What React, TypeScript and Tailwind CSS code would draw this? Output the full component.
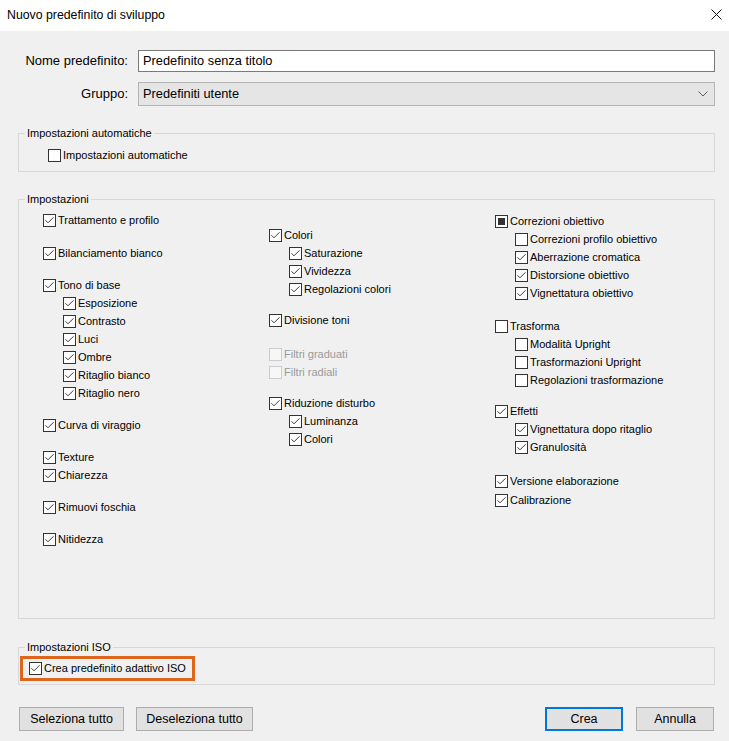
import React from "react";

type S = "on" | "off" | "mixed" | "dis";

function Box({ s }: { s: S }) {
  if (s === "dis") {
    return <span className="flex h-[13px] w-[13px] shrink-0 border border-[#cccccc] bg-[#f7f7f7]" />;
  }
  return (
    <span className="flex h-[13px] w-[13px] shrink-0 items-center justify-center border border-[#333333] bg-white">
      {s === "on" && (
        <svg width="11" height="11" viewBox="0 0 11 11">
          <polyline points="1.5,5.3 4,7.8 9.5,2.3" fill="none" stroke="#3a3a3a" strokeWidth="1" />
        </svg>
      )}
      {s === "mixed" && <span className="h-[7px] w-[7px] bg-[#333333]" />}
    </span>
  );
}

type It = { l: string; s?: S; sub?: boolean; mt?: string };

function Item({ it }: { it: It }) {
  const s = it.s ?? "on";
  return (
    <div className={`flex h-[18px] items-center ${it.sub ? "pl-[20px]" : ""} ${it.mt ?? ""}`}>
      <Box s={s} />
      <span className={`ml-[2px] whitespace-nowrap ${s === "dis" ? "text-[#9a9a9a]" : "text-black"}`}>{it.l}</span>
    </div>
  );
}

const left: It[] = [
  { l: "Trattamento e profilo" },
  { l: "Bilanciamento bianco", mt: "mt-[15px]" },
  { l: "Tono di base", mt: "mt-[14px]" },
  { l: "Esposizione", sub: true },
  { l: "Contrasto", sub: true },
  { l: "Luci", sub: true },
  { l: "Ombre", sub: true },
  { l: "Ritaglio bianco", sub: true },
  { l: "Ritaglio nero", sub: true },
  { l: "Curva di viraggio", mt: "mt-[14px]" },
  { l: "Texture", mt: "mt-[14px]" },
  { l: "Chiarezza" },
  { l: "Rimuovi foschia", mt: "mt-[14px]" },
  { l: "Nitidezza", mt: "mt-[14px]" },
];

const middle: It[] = [
  { l: "Colori" },
  { l: "Saturazione", sub: true },
  { l: "Vividezza", sub: true },
  { l: "Regolazioni colori", sub: true },
  { l: "Divisione toni", mt: "mt-[13px]" },
  { l: "Filtri graduati", s: "dis", mt: "mt-[16px]" },
  { l: "Filtri radiali", s: "dis" },
  { l: "Riduzione disturbo", mt: "mt-[13px]" },
  { l: "Luminanza", sub: true },
  { l: "Colori", sub: true },
];

const right: It[] = [
  { l: "Correzioni obiettivo", s: "mixed" },
  { l: "Correzioni profilo obiettivo", s: "off", sub: true },
  { l: "Aberrazione cromatica", sub: true },
  { l: "Distorsione obiettivo", sub: true },
  { l: "Vignettatura obiettivo", sub: true },
  { l: "Trasforma", s: "off", mt: "mt-[15px]" },
  { l: "Modalità Upright", s: "off", sub: true },
  { l: "Trasformazioni Upright", s: "off", sub: true },
  { l: "Regolazioni trasformazione", s: "off", sub: true },
  { l: "Effetti", mt: "mt-[13px]" },
  { l: "Vignettatura dopo ritaglio", sub: true },
  { l: "Granulosità", sub: true },
  { l: "Versione elaborazione", mt: "mt-[16px]" },
  { l: "Calibrazione", mt: "mt-[1px]" },
];

function Legend({ children }: { children: React.ReactNode }) {
  return <legend className="ml-[6px] px-[2px] text-[11px] leading-[14px] text-black">{children}</legend>;
}

function Btn({ children, w, primary }: { children: React.ReactNode; w: string; primary?: boolean }) {
  return (
    <div
      className={`flex h-[24px] ${w} items-center justify-center bg-[#e1e1e1] text-[12.5px] text-black ${
        primary ? "border-2 border-[#0078d7]" : "border border-[#adadad]"
      }`}
    >
      {children}
    </div>
  );
}

export default function App() {
  return (
    <div className="flex h-[741px] w-[729px] flex-col overflow-hidden bg-[#f0f0f0] font-['Liberation_Sans',Arial,sans-serif] text-[11px] text-black">
      {/* title bar */}
      <div className="flex h-[31px] shrink-0 items-center justify-between bg-white pl-[7px] pr-[7px]">
        <span className="text-[12.3px] text-black">Nuovo predefinito di sviluppo</span>
        <svg width="11" height="11" viewBox="0 0 11 11" className="mb-[2px]">
          <line x1="0.5" y1="0.5" x2="10.5" y2="10.5" stroke="#111" strokeWidth="1" />
          <line x1="10.5" y1="0.5" x2="0.5" y2="10.5" stroke="#111" strokeWidth="1" />
        </svg>
      </div>

      <div className="flex flex-col pl-[18px] pr-[14px] pt-[19px]">
        {/* name row */}
        <div className="flex h-[22px] items-center">
          <span className="w-[110px] whitespace-nowrap text-right text-[13px]">Nome predefinito:</span>
          <div className="ml-[10px] flex h-[22px] flex-1 items-center border border-[#7a7a7a] bg-white pl-[4px] text-[12.8px]">
            Predefinito senza titolo
          </div>
        </div>
        {/* group row */}
        <div className="mt-[10px] flex h-[24px] items-center">
          <span className="w-[110px] whitespace-nowrap text-right text-[13px]">Gruppo:</span>
          <div className="ml-[10px] flex h-[24px] flex-1 items-center justify-between border border-[#b4b4b4] bg-[#e5e5e5] pl-[4px] pr-[6px] text-[12.8px]">
            <span>Predefiniti utente</span>
            <svg width="10" height="6" viewBox="0 0 10 6">
              <polyline points="0.5,0.5 5,5 9.5,0.5" fill="none" stroke="#606060" strokeWidth="1" />
            </svg>
          </div>
        </div>

        {/* auto settings */}
        <fieldset className="mt-[20px] border border-[#d8d8d8]">
          <Legend>Impostazioni automatiche</Legend>
          <div className="pb-[7px] pl-[29px] pt-[6px]">
            <Item it={{ l: "Impostazioni automatiche", s: "off" }} />
          </div>
        </fieldset>

        {/* settings */}
        <fieldset className="mt-[20px] border border-[#d8d8d8]">
          <Legend>Impostazioni</Legend>
          <div className="grid h-[412px] grid-cols-[226px_226px_1fr] content-start pl-[24px] pt-[5px]">
            <div className="flex flex-col">
              {left.map((it, i) => (
                <Item key={i} it={it} />
              ))}
            </div>
            <div className="flex flex-col pt-[15px]">
              {middle.map((it, i) => (
                <Item key={i} it={it} />
              ))}
            </div>
            <div className="flex flex-col pt-[1px]">
              {right.map((it, i) => (
                <Item key={i} it={it} />
              ))}
            </div>
          </div>
        </fieldset>

        {/* ISO */}
        <fieldset className="mt-[21px] border border-[#d8d8d8]">
          <Legend>Impostazioni ISO</Legend>
          <div className="pb-[3px] pl-[1px] pt-[2px]">
            <div className="flex h-[25px] w-fit items-center border-[3px] border-[#dd661c] pl-[6px] pr-[6px]">
              <Box s="on" />
              <span className="ml-[2px] whitespace-nowrap">Crea predefinito adattivo ISO</span>
            </div>
          </div>
        </fieldset>

        {/* buttons */}
        <div className="mt-[22px] flex items-center pl-[1px] pr-[1px]">
          <Btn w="w-[105px]">Seleziona tutto</Btn>
          <div className="ml-[12px]">
            <Btn w="w-[117px]">Deseleziona tutto</Btn>
          </div>
          <div className="flex-1" />
          <Btn w="w-[78px]" primary>
            Crea
          </Btn>
          <div className="ml-[13px]">
            <Btn w="w-[78px]">Annulla</Btn>
          </div>
        </div>
      </div>
    </div>
  );
}
